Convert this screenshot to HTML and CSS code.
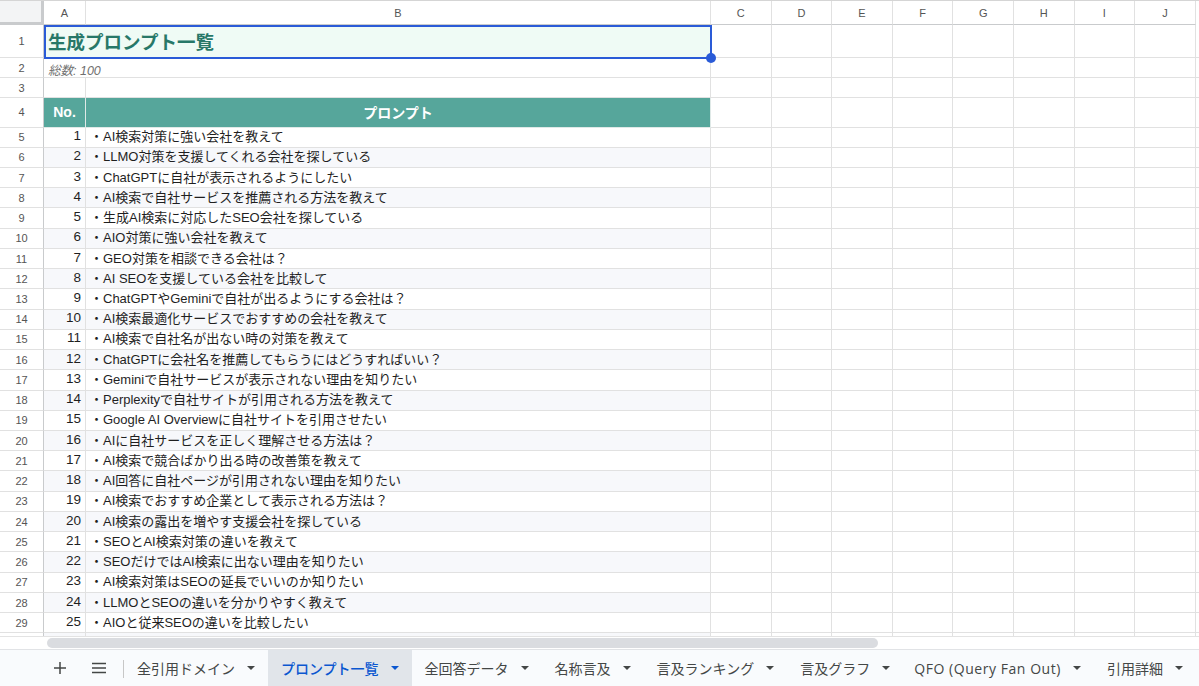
FILE: index.html
```html
<!DOCTYPE html>
<html lang="ja">
<head>
<meta charset="utf-8">
<title>生成プロンプト一覧</title>
<link rel="stylesheet" href="styles.css">
</head>
<body>
<div class="app">
  <div class="sheet">
    <div class="row colhdr">
      <div class="corner"></div>
      <div class="ch">A</div>
      <div class="ch">B</div>
      <div class="chs"><span>C</span><span>D</span><span>E</span><span>F</span><span>G</span><span>H</span><span>I</span><span>J</span></div>
    </div>
    <div class="row r1"><div class="rh">1</div><div class="c title">生成プロンプト一覧</div><div class="rest"></div></div>
    <div class="row r2"><div class="rh">2</div><div class="c total">総数: 100</div><div class="rest"></div></div>
    <div class="row r2"><div class="rh">3</div><div class="c a"></div><div class="c b"></div><div class="rest"></div></div>
    <div class="row r4"><div class="rh">4</div><div class="c head">No.</div><div class="c head">プロンプト</div><div class="rest"></div></div>
    <div class="row data"><div class="rh">5</div><div class="c a">1</div><div class="c b">・AI検索対策に強い会社を教えて</div><div class="rest"></div></div>
    <div class="row data alt"><div class="rh">6</div><div class="c a">2</div><div class="c b">・LLMO対策を支援してくれる会社を探している</div><div class="rest"></div></div>
    <div class="row data"><div class="rh">7</div><div class="c a">3</div><div class="c b">・ChatGPTに自社が表示されるようにしたい</div><div class="rest"></div></div>
    <div class="row data alt"><div class="rh">8</div><div class="c a">4</div><div class="c b">・AI検索で自社サービスを推薦される方法を教えて</div><div class="rest"></div></div>
    <div class="row data"><div class="rh">9</div><div class="c a">5</div><div class="c b">・生成AI検索に対応したSEO会社を探している</div><div class="rest"></div></div>
    <div class="row data alt"><div class="rh">10</div><div class="c a">6</div><div class="c b">・AIO対策に強い会社を教えて</div><div class="rest"></div></div>
    <div class="row data"><div class="rh">11</div><div class="c a">7</div><div class="c b">・GEO対策を相談できる会社は？</div><div class="rest"></div></div>
    <div class="row data alt"><div class="rh">12</div><div class="c a">8</div><div class="c b">・AI SEOを支援している会社を比較して</div><div class="rest"></div></div>
    <div class="row data"><div class="rh">13</div><div class="c a">9</div><div class="c b">・ChatGPTやGeminiで自社が出るようにする会社は？</div><div class="rest"></div></div>
    <div class="row data alt"><div class="rh">14</div><div class="c a">10</div><div class="c b">・AI検索最適化サービスでおすすめの会社を教えて</div><div class="rest"></div></div>
    <div class="row data"><div class="rh">15</div><div class="c a">11</div><div class="c b">・AI検索で自社名が出ない時の対策を教えて</div><div class="rest"></div></div>
    <div class="row data alt"><div class="rh">16</div><div class="c a">12</div><div class="c b">・ChatGPTに会社名を推薦してもらうにはどうすればいい？</div><div class="rest"></div></div>
    <div class="row data"><div class="rh">17</div><div class="c a">13</div><div class="c b">・Geminiで自社サービスが表示されない理由を知りたい</div><div class="rest"></div></div>
    <div class="row data alt"><div class="rh">18</div><div class="c a">14</div><div class="c b">・Perplexityで自社サイトが引用される方法を教えて</div><div class="rest"></div></div>
    <div class="row data"><div class="rh">19</div><div class="c a">15</div><div class="c b">・Google AI Overviewに自社サイトを引用させたい</div><div class="rest"></div></div>
    <div class="row data alt"><div class="rh">20</div><div class="c a">16</div><div class="c b">・AIに自社サービスを正しく理解させる方法は？</div><div class="rest"></div></div>
    <div class="row data"><div class="rh">21</div><div class="c a">17</div><div class="c b">・AI検索で競合ばかり出る時の改善策を教えて</div><div class="rest"></div></div>
    <div class="row data alt"><div class="rh">22</div><div class="c a">18</div><div class="c b">・AI回答に自社ページが引用されない理由を知りたい</div><div class="rest"></div></div>
    <div class="row data"><div class="rh">23</div><div class="c a">19</div><div class="c b">・AI検索でおすすめ企業として表示される方法は？</div><div class="rest"></div></div>
    <div class="row data alt"><div class="rh">24</div><div class="c a">20</div><div class="c b">・AI検索の露出を増やす支援会社を探している</div><div class="rest"></div></div>
    <div class="row data"><div class="rh">25</div><div class="c a">21</div><div class="c b">・SEOとAI検索対策の違いを教えて</div><div class="rest"></div></div>
    <div class="row data alt"><div class="rh">26</div><div class="c a">22</div><div class="c b">・SEOだけではAI検索に出ない理由を知りたい</div><div class="rest"></div></div>
    <div class="row data"><div class="rh">27</div><div class="c a">23</div><div class="c b">・AI検索対策はSEOの延長でいいのか知りたい</div><div class="rest"></div></div>
    <div class="row data alt"><div class="rh">28</div><div class="c a">24</div><div class="c b">・LLMOとSEOの違いを分かりやすく教えて</div><div class="rest"></div></div>
    <div class="row data"><div class="rh">29</div><div class="c a">25</div><div class="c b">・AIOと従来SEOの違いを比較したい</div><div class="rest"></div></div>
    <div class="row data alt"><div class="rh"></div><div class="c a"></div><div class="c b">・AI検索対策をプロに依頼するメリットが知りたい</div><div class="rest"></div></div>
    <div class="selection"><span class="handle"></span></div>
  </div>
  <div class="hscroll"><div class="thumb"></div></div>
  <div class="tabs">
    <button class="icon" aria-label="シートを追加">
      <svg width="14" height="14" viewBox="0 0 14 14"><path d="M7 1v12M1 7h12" stroke="#444746" stroke-width="1.5" fill="none"/></svg>
    </button>
    <button class="icon" aria-label="すべてのシート">
      <svg width="16" height="12" viewBox="0 0 16 12"><path d="M1 1.5h14M1 6h14M1 10.5h14" stroke="#444746" stroke-width="1.5" fill="none"/></svg>
    </button>
    <div class="sep"></div>
    <div class="tab">全引用ドメイン<svg class="caret" width="8" height="4" viewBox="0 0 8 4"><path d="M0 0h8L4 4z"/></svg></div>
    <div class="tab active">プロンプト一覧<svg class="caret" width="8" height="4" viewBox="0 0 8 4"><path d="M0 0h8L4 4z"/></svg></div>
    <div class="tab">全回答データ<svg class="caret" width="8" height="4" viewBox="0 0 8 4"><path d="M0 0h8L4 4z"/></svg></div>
    <div class="tab">名称言及<svg class="caret" width="8" height="4" viewBox="0 0 8 4"><path d="M0 0h8L4 4z"/></svg></div>
    <div class="tab">言及ランキング<svg class="caret" width="8" height="4" viewBox="0 0 8 4"><path d="M0 0h8L4 4z"/></svg></div>
    <div class="tab">言及グラフ<svg class="caret" width="8" height="4" viewBox="0 0 8 4"><path d="M0 0h8L4 4z"/></svg></div>
    <div class="tab latin">QFO (Query Fan Out)<svg class="caret" width="8" height="4" viewBox="0 0 8 4"><path d="M0 0h8L4 4z"/></svg></div>
    <div class="tab">引用詳細<svg class="caret" width="8" height="4" viewBox="0 0 8 4"><path d="M0 0h8L4 4z"/></svg></div>
  </div>
</div>
</body>
</html>
```

FILE: styles.css
```css
* { box-sizing: border-box; }
html, body { margin: 0; padding: 0; background: #fff; }
body {
  font-family: "Liberation Sans", "Noto Sans CJK JP", sans-serif;
  color: #1f1f1f;
  width: 1199px;
  height: 686px;
  overflow: hidden;
}
.app { display: flex; flex-direction: column; height: 686px; }

.sheet {
  position: relative;
  height: 636px;
  overflow: hidden;
  flex: none;
}

.row {
  display: grid;
  grid-template-columns: 44px 42px 625px 1fr;
}

/* column header */
.colhdr { height: 25px; border-top: 1px solid #d5d5d5; }
.corner {
  background: #f3f4f5;
  border-right: 3px solid #c9cbcd;
  border-bottom: 3px solid #c9cbcd;
}
.ch, .chs span {
  display: flex;
  align-items: center;
  justify-content: center;
  font-size: 11px;
  color: #555;
  border-right: 1px solid #e1e1e1;
  border-bottom: 1px solid #c9cbcd;
}
.chs { display: flex; }
.chs span { width: 60.6px; flex: none; }

/* row header */
.rh {
  display: flex;
  align-items: center;
  justify-content: center;
  font-size: 11px;
  color: #555;
  border-right: 1px solid #c9cbcd;
  border-bottom: 1px solid #e1e1e1;
}

.c {
  border-right: 1px solid #e1e1e1;
  border-bottom: 1px solid #e1e1e1;
  display: flex;
  align-items: center;
  white-space: nowrap;
  overflow: hidden;
}
.rest {
  border-bottom: 1px solid #e1e1e1;
  background: repeating-linear-gradient(90deg, transparent 0, transparent 59.6px, #e1e1e1 59.6px, #e1e1e1 60.6px);
}

.r1 { height: 33px; }
.r2 { height: 20px; }
.r4 { height: 29.5px; }
.data { height: 20.24px; }

.title {
  grid-column: span 2;
  background: #effbf5;
  color: #277868;
  font-weight: bold;
  font-size: 18.5px;
  padding-left: 4px;
}
.total {
  grid-column: span 2;
  font-style: italic;
  font-size: 12.5px;
  color: #6f6f6f;
  padding-left: 4px;
  padding-top: 3px;
}
.head {
  background: #56a69b;
  color: #fff;
  font-weight: bold;
  font-size: 14px;
  justify-content: center;
  border-right-color: #dfe9e7;
  border-bottom-color: #dfe9e7;
}
.data .c { font-size: 13px; color: #1f1f1f; padding-bottom: 3px; }
.data .a { justify-content: flex-end; padding-right: 4px; font-size: 13.5px; }
.data .b { padding-left: 4px; }
.alt .c { background: #f7f8fb; }

.selection {
  position: absolute;
  left: 44px;
  top: 25px;
  width: 668px;
  height: 34px;
  border: 2px solid #2a5bd7;
  pointer-events: none;
}
.handle {
  position: absolute;
  right: -6px;
  bottom: -6px;
  width: 10px;
  height: 10px;
  border-radius: 50%;
  background: #2a5bd7;
}

/* horizontal scroll */
.hscroll {
  height: 13px;
  flex: none;
  border-top: 1px solid #e3e3e3;
  position: relative;
}
.thumb {
  position: absolute;
  left: 47px;
  top: 1px;
  width: 831px;
  height: 10px;
  border-radius: 5px;
  background: #dadce0;
}

/* tabs */
.tabs {
  flex: 1;
  display: flex;
  align-items: stretch;
  background: #f9fbfd;
  border-top: 1px solid #e1e3e6;
  padding-left: 42px;
  font-family: "Open Sans", "Noto Sans CJK JP", sans-serif;
}
.icon {
  width: 36px;
  border: 0;
  background: transparent;
  padding: 0;
  display: flex;
  align-items: center;
  justify-content: center;
  margin-right: 3px;
}
.sep {
  width: 1px;
  background: #c7c7c7;
  margin: 10px 0 8px 3px;
}
.tab {
  display: flex;
  align-items: center;
  padding: 0 13px 0 13px;
  font-size: 14px;
  color: #444746;
  white-space: nowrap;
}
.tab.latin { padding-left: 11px; letter-spacing: 0.55px; }
.tab .caret { margin-left: 12px; fill: #444746; }
.tab.active {
  background: #e1e5ea;
  color: #0b57d0;
  font-weight: 500;
}
.tab.active .caret { fill: #0b57d0; }
```
